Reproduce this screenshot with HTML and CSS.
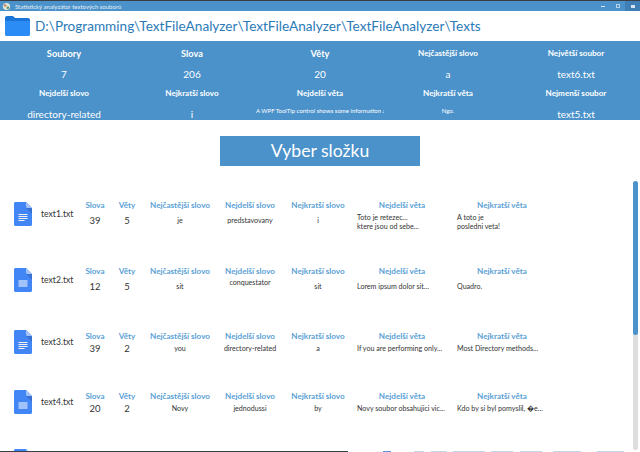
FILE: index.html
```html
<!DOCTYPE html>
<html lang="cs">
<head>
    <meta charset="UTF-8">
    <meta name="viewport" content="width=device-width, initial-scale=1.0">
    <title>Statistický analyzátor textových souborů</title>
    <link rel="stylesheet" href="styles.css">
</head>
<body>
    <div class="window">
        <div class="titlebar">
            <svg class="app-icon" viewBox="0 0 10 10"><circle cx="5" cy="5" r="4" fill="#dfe6d8"/><circle cx="3.500" cy="4" r="1.400" fill="#c9855a"/><circle cx="6.500" cy="6.500" r="1.400" fill="#5f8f6a"/></svg>
            <span class="title-text">Statistický analyzátor textových souborů</span>
            <div class="controls">
                <span class="ctl"><span class="ctl-min"></span></span>
                <span class="ctl"><span class="ctl-max"></span></span>
                <span class="ctl ctl-close"><span class="ctl-x"></span></span>
            </div>
        </div>

        <div class="path-bar">
            <svg class="folder-icon" viewBox="0 0 25 20">
                <path d="M0 2C0 .9.900 0 2 0h6l2 2h13c1.100 0 2 .9 2 2v2H0z" fill="#1b75d8"/>
                <path d="M0 5h25v13.500c0 .8-.7 1.500-1.500 1.500h-22C.7 20 0 19.300 0 18.500z" fill="#2b8cf5"/>
            </svg>
            <span class="path-text">D:\Programming\TextFileAnalyzer\TextFileAnalyzer\TextFileAnalyzer\Texts</span>
        </div>

        <div class="summary">
            <div class="cell head">Soubory</div>
            <div class="cell head">Slova</div>
            <div class="cell head">Věty</div>
            <div class="cell head small">Nejčastější slovo</div>
            <div class="cell head small">Největší soubor</div>

            <div class="cell value">7</div>
            <div class="cell value">206</div>
            <div class="cell value">20</div>
            <div class="cell value">a</div>
            <div class="cell value">text6.txt</div>

            <div class="cell head small">Nejdelší slovo</div>
            <div class="cell head small">Nejkratší slovo</div>
            <div class="cell head small">Nejdelší věta</div>
            <div class="cell head small">Nejkratší věta</div>
            <div class="cell head small">Nejmenší soubor</div>

            <div class="cell value low">directory-related</div>
            <div class="cell value low">i</div>
            <div class="cell tiny clip">A WPF ToolTip control shows some information about</div>
            <div class="cell tiny">Ngo.</div>
            <div class="cell value low">text5.txt</div>
        </div>

        <div class="button-row">
            <div class="pick-btn">Vyber složku</div>
        </div>

        <div class="files">
            <div class="scrollbar"><div class="thumb"></div></div>

            <div class="file-row row-a">
                <svg class="doc-icon" viewBox="0 0 18 24"><use href="#doc"/></svg>
                <div class="file-name">text1.txt</div>
                <div class="col c-slova"><div class="lbl">Slova</div><div class="num">39</div></div>
                <div class="col c-vety"><div class="lbl">Věty</div><div class="num">5</div></div>
                <div class="col c-cast"><div class="lbl">Nejčastější slovo</div><div class="txt">je</div></div>
                <div class="col c-dels"><div class="lbl">Nejdelší slovo</div><div class="txt">predstavovany</div></div>
                <div class="col c-krat"><div class="lbl">Nejkratší slovo</div><div class="txt">i</div></div>
                <div class="col c-dv"><div class="lbl">Nejdelší věta</div><div class="sent">Toto je retezec...<br>ktere jsou od sebe...</div></div>
                <div class="col c-kv"><div class="lbl">Nejkratší věta</div><div class="sent">A toto je<br>posledni veta!</div></div>
            </div>

            <div class="file-row row-b">
                <svg class="doc-icon" viewBox="0 0 18 24"><use href="#doc2"/></svg>
                <div class="file-name">text2.txt</div>
                <div class="col c-slova"><div class="lbl">Slova</div><div class="num">12</div></div>
                <div class="col c-vety"><div class="lbl">Věty</div><div class="num">5</div></div>
                <div class="col c-cast"><div class="lbl">Nejčastější slovo</div><div class="txt">sit</div></div>
                <div class="col c-dels"><div class="lbl">Nejdelší slovo</div><div class="txt raised">conquestator</div></div>
                <div class="col c-krat"><div class="lbl">Nejkratší slovo</div><div class="txt">sit</div></div>
                <div class="col c-dv"><div class="lbl">Nejdelší věta</div><div class="sent one">Lorem ipsum dolor sit...</div></div>
                <div class="col c-kv"><div class="lbl">Nejkratší věta</div><div class="sent one">Quadro.</div></div>
            </div>

            <div class="file-row row-c tight">
                <svg class="doc-icon" viewBox="0 0 18 24"><use href="#doc"/></svg>
                <div class="file-name">text3.txt</div>
                <div class="col c-slova"><div class="lbl">Slova</div><div class="num">39</div></div>
                <div class="col c-vety"><div class="lbl">Věty</div><div class="num">2</div></div>
                <div class="col c-cast"><div class="lbl">Nejčastější slovo</div><div class="txt">you</div></div>
                <div class="col c-dels"><div class="lbl">Nejdelší slovo</div><div class="txt">directory-related</div></div>
                <div class="col c-krat"><div class="lbl">Nejkratší slovo</div><div class="txt">a</div></div>
                <div class="col c-dv"><div class="lbl">Nejdelší věta</div><div class="sent one">If you are performing only...</div></div>
                <div class="col c-kv"><div class="lbl">Nejkratší věta</div><div class="sent one">Most Directory methods...</div></div>
            </div>

            <div class="file-row row-d tight">
                <svg class="doc-icon" viewBox="0 0 18 24"><use href="#doc2"/></svg>
                <div class="file-name">text4.txt</div>
                <div class="col c-slova"><div class="lbl">Slova</div><div class="num">20</div></div>
                <div class="col c-vety"><div class="lbl">Věty</div><div class="num">2</div></div>
                <div class="col c-cast"><div class="lbl">Nejčastější slovo</div><div class="txt">Novy</div></div>
                <div class="col c-dels"><div class="lbl">Nejdelší slovo</div><div class="txt">jednodussi</div></div>
                <div class="col c-krat"><div class="lbl">Nejkratší slovo</div><div class="txt">by</div></div>
                <div class="col c-dv"><div class="lbl">Nejdelší věta</div><div class="sent one">Novy soubor obsahujici vic...</div></div>
                <div class="col c-kv"><div class="lbl">Nejkratší věta</div><div class="sent one">Kdo by si byl pomyslil, �e...</div></div>
            </div>

            <div class="file-row">
                <svg class="doc-icon" viewBox="0 0 18 24"><use href="#doc"/></svg>
            </div>
        </div>

        <div class="taskbar-edge"></div>
    </div>

    <svg class="defs" width="0" height="0">
        <defs>
            <g id="doc-base">
                <path d="M1.500 0H12l6 6v16.500c0 .8-.7 1.500-1.500 1.500h-15C.7 24 0 23.300 0 22.500v-21C0 .7.700 0 1.500 0z" fill="#4285f4"/>
                <path d="M12 0l6 6h-4.500C12.700 6 12 5.300 12 4.500z" fill="#a1c2fa"/>
                <path d="M12 6l6 6V6z" fill="#3a72d4"/>
            </g>
            <g id="doc">
                <use href="#doc-base"/>
                <path d="M4.500 12h9v1h-9zM4.500 14h9v1h-9zM4.500 16h9v1h-9zM4.500 18h6v1h-6z" fill="#f1f1f1"/>
            </g>
            <g id="doc2">
                <use href="#doc-base"/>
                <rect x="4.500" y="12" width="9" height="7" fill="#a1c2fa"/>
            </g>
        </defs>
    </svg>
</body>
</html>
```

FILE: styles.css
```css
* {
    box-sizing: border-box;
}

html, body {
    margin: 0;
    height: 100%;
    overflow: hidden;
}

body {
    font-family: 'Lato', 'Open Sans', sans-serif;
    background: #fff;
    color: #333;
}

.window {
    height: 452px;
    display: flex;
    flex-direction: column;
    position: relative;
    overflow: hidden;
}

.titlebar {
    height: 11px;
    flex: none;
    background: #4b92ca;
    border-top: 1px solid #3a3f45;
    display: flex;
    align-items: center;
    padding-left: 2px;
    color: #e6f0f8;
}

.app-icon {
    width: 9px;
    height: 9px;
}

.title-text {
    font-size: 6px;
    margin-left: 4px;
}

.controls {
    margin-left: auto;
    display: flex;
    height: 100%;
}

.ctl {
    width: 15px;
    display: flex;
    align-items: center;
    justify-content: center;
}

.ctl-close {
    background: #3f7fb5;
}

.ctl-min {
    width: 4px;
    height: 1px;
    background: #d5e5f2;
}

.ctl-max {
    width: 4px;
    height: 4px;
    border: 1px solid #b9d3e8;
}

.ctl-x {
    width: 4px;
    height: 3px;
    background: #d5e5f2;
}

.path-bar {
    height: 30px;
    flex: none;
    display: flex;
    align-items: center;
    padding-left: 5px;
    background: #fff;
}

.folder-icon {
    width: 25px;
    height: 20px;
    margin-right: 5px;
}

.path-text {
    font-size: 13.600px;
    color: #2b7ab8;
    white-space: nowrap;
}

.summary {
    height: 79px;
    flex: none;
    background: #4b92ca;
    color: #fff;
    display: grid;
    grid-template-columns: repeat(5, 128px);
    grid-template-rows: 24px 18px 20px 17px;
}

.cell {
    display: flex;
    justify-content: center;
    align-items: center;
    white-space: nowrap;
}

.head {
    font-size: 9.200px;
    font-weight: 700;
}

.head.small {
    font-size: 8.100px;
}

.value {
    font-size: 10px;
}

.value.low {
    align-items: flex-start;
    padding-top: 5px;
}

.tiny {
    font-size: 6px;
    padding-bottom: 2px;
}

.clip {
    justify-content: flex-start;
    overflow: hidden;
}

.button-row {
    flex: none;
    display: flex;
    justify-content: center;
    padding-top: 16px;
}

.pick-btn {
    width: 200px;
    height: 30px;
    background: #4b92ca;
    color: #fff;
    font-size: 17.600px;
    line-height: 30px;
    text-align: center;
}

.files {
    flex: 1;
    position: relative;
    padding-top: 33px;
}

.scrollbar {
    position: absolute;
    top: 15px;
    right: 2px;
    width: 5px;
    height: 269px;
    background: #ddd;
    border-radius: 3px;
}

.thumb {
    height: 154px;
    background: #4b92ca;
    border-radius: 3px;
}

.file-row {
    display: flex;
    align-items: flex-start;
}

.row-a { height: 66px; }
.row-b { height: 62px; }
.row-c { height: 60px; }
.row-d { height: 59px; }

.doc-icon {
    width: 18px;
    height: 24px;
    margin: 3px 0 0 14px;
    flex: none;
}

.file-name {
    font-size: 8.600px;
    line-height: 12px;
    margin: 9px 0 0 9px;
    width: 39px;
    flex: none;
}

.col {
    flex: none;
    text-align: center;
}

.lbl {
    font-size: 8.100px;
    font-weight: 700;
    color: #5a9fd6;
    line-height: 12px;
    white-space: nowrap;
}

.num {
    font-size: 9.500px;
    line-height: 14px;
    margin-top: 3px;
}

.txt {
    font-size: 7.100px;
    line-height: 12px;
    margin-top: 4px;
    white-space: nowrap;
}

.txt.raised {
    margin-top: 0;
}

.sent {
    font-size: 7.100px;
    line-height: 9px;
    text-align: left;
    white-space: nowrap;
    margin-top: 2px;
}

.sent.one {
    line-height: 10px;
    margin-top: 5px;
}

.tight .col {
    padding-top: 3px;
}

.tight .num {
    margin-top: 0;
}

.tight .txt {
    margin-top: 1px;
}

.tight .sent.one {
    margin-top: 2px;
}

.c-slova { width: 30px; }
.c-vety { width: 20px; margin-left: 7px; }
.c-cast { width: 70px; margin-left: 8px; }
.c-dels { width: 60px; margin-left: 5px; }
.c-krat { width: 60px; margin-left: 8px; }
.c-dv { width: 90px; margin-left: 9px; }
.c-kv { width: 90px; margin-left: 10px; }

.taskbar-edge {
    position: absolute;
    left: 0;
    bottom: 0;
    width: 640px;
    height: 1px;
    background: linear-gradient(90deg,
        #3a3f45 0 348px, #fff 348px 383px,
        #5a90e0 383px 391px, #fff 391px 414px,
        #c3d8ec 414px 424px, #fff 424px 431px,
        #c3d8ec 431px 447px, #fff 447px 453px,
        #c3d8ec 453px 485px, #fff 485px 491px,
        #c3d8ec 491px 513px, #fff 513px 520px,
        #c3d8ec 520px 542px, #fff 542px 553px,
        #c3d8ec 553px 581px, #fff 581px 597px,
        #c3d8ec 597px 624px, #fff 624px);
}

.defs {
    position: absolute;
}
```
